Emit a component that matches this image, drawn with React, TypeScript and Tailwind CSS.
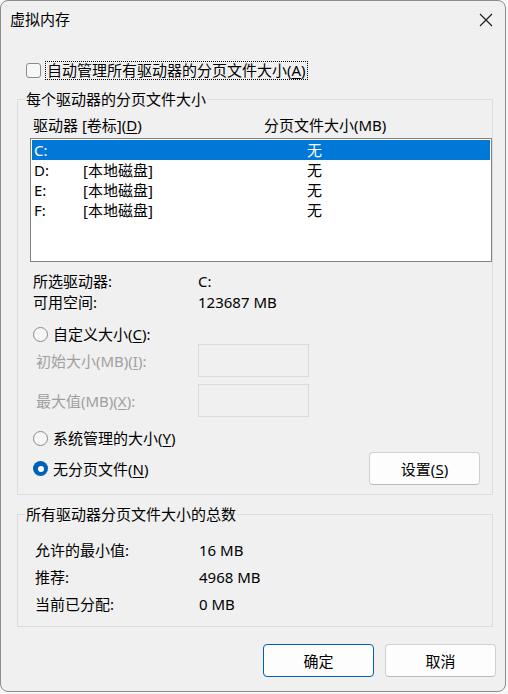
import React from "react";

const font = { fontFamily: '"Noto Sans", "Noto Sans CJK SC", sans-serif' };

function U({ children }: { children: React.ReactNode }) {
  return <span className="underline underline-offset-[2px] decoration-[1px]">{children}</span>;
}

function Radio({ checked }: { checked?: boolean }) {
  if (checked) {
    return (
      <span className="flex h-[15px] w-[15px] shrink-0 items-center justify-center rounded-full bg-[#005fb8]">
        <span className="h-[6px] w-[6px] rounded-full bg-white" />
      </span>
    );
  }
  return <span className="h-[15px] w-[15px] shrink-0 rounded-full border border-[#8a8a8a] bg-[#f6f6f6]" />;
}

export default function App() {
  const drives = [
    { d: "C:", v: "", s: "无", sel: true },
    { d: "D:", v: "[本地磁盘]", s: "无" },
    { d: "E:", v: "[本地磁盘]", s: "无" },
    { d: "F:", v: "[本地磁盘]", s: "无" },
  ];
  return (
    <div className="h-[694px] w-[508px] bg-[#f7f7f7]" style={font}>
      <div className="flex h-[692px] w-[506px] flex-col overflow-hidden rounded-[8px] border border-[#8c8c8c] bg-[#f0f0f0] text-[15px] leading-[20px] text-black">
        {/* title bar */}
        <div className="flex h-[35px] shrink-0 items-center justify-between pl-[9px] pr-[12px]">
          <span className="pt-[1px]">虚拟内存</span>
          <svg width="14" height="14" viewBox="0 0 14 14" className="mt-[2px]">
            <path d="M1 1 L13 13 M13 1 L1 13" stroke="#1a1a1a" strokeWidth="1.1" fill="none" />
          </svg>
        </div>

        {/* auto manage checkbox */}
        <div className="mt-[24px] flex h-[20px] items-center pl-[25px]">
          <span className="h-[15px] w-[15px] shrink-0 rounded-[3px] border border-[#8a8a8a] bg-[#f7f7f7]" />
          <span className="ml-[4px] border border-dotted border-black px-[1px] leading-[17px]">
            自动管理所有驱动器的分页文件大小(<U>A</U>)
          </span>
        </div>

        {/* group 1 */}
        <fieldset className="mt-[9px] ml-[16px] w-[476px] border border-[#dcdcdc] p-0 pb-[9px]">
          <legend className="ml-[7px] px-[1px] leading-[20px]">每个驱动器的分页文件大小</legend>
          <div className="mt-[6px] flex h-[20px] items-center pl-[15px]">
            <span className="w-[231px]">
              驱动器 [卷标](<U>D</U>)
            </span>
            <span>分页文件大小(MB)</span>
          </div>
          <div className="mt-[3px] ml-[12px] h-[124px] w-[462px] border border-[#828282] bg-white p-[1px]">
            {drives.map((r) => (
              <div
                key={r.d}
                className={
                  "flex h-[20px] items-center pl-[2px] " + (r.sel ? "bg-[#0078d7] text-white" : "")
                }
              >
                <span className="w-[49px]">{r.d}</span>
                <span className="w-[224px]">{r.v}</span>
                <span>{r.s}</span>
              </div>
            ))}
          </div>
          <div className="mt-[8px] flex h-[21px] items-center pl-[15px]">
            <span className="w-[165px]">所选驱动器:</span>
            <span>C:</span>
          </div>
          <div className="flex h-[21px] items-center pl-[15px]">
            <span className="w-[165px]">可用空间:</span>
            <span>123687 MB</span>
          </div>

          <div className="mt-[12px] flex h-[20px] items-center gap-[5px] pl-[15px]">
            <Radio />
            <span>
              自定义大小(<U>C</U>):
            </span>
          </div>
          <div className="flex h-[33px] items-center pl-[18px] text-[#a0a0a0]">
            <span className="w-[162px]">
              初始大小(MB)(<U>I</U>):
            </span>
            <span className="h-[33px] w-[111px] border border-[#dadada]" />
          </div>
          <div className="mt-[7px] flex h-[33px] items-center pl-[18px] text-[#a0a0a0]">
            <span className="w-[162px]">
              最大值(MB)(<U>X</U>):
            </span>
            <span className="h-[33px] w-[111px] border border-[#dadada]" />
          </div>
          <div className="mt-[11px] flex h-[20px] items-center gap-[5px] pl-[15px]">
            <Radio />
            <span>
              系统管理的大小(<U>Y</U>)
            </span>
          </div>
          <div className="mt-[4px] flex h-[33px] items-center justify-between pl-[15px] pr-[12px]">
            <div className="flex items-center gap-[5px]">
              <Radio checked />
              <span>
                无分页文件(<U>N</U>)
              </span>
            </div>
            <button className="h-[33px] w-[111px] rounded-[4px] border border-[#d0d0d0] border-b-[#bdbdbd] bg-[#fdfdfd]">
              设置(<U>S</U>)
            </button>
          </div>
        </fieldset>

        {/* group 2 */}
        <fieldset className="mt-[9px] ml-[16px] w-[476px] border border-[#dcdcdc] p-0 pt-[12px] pb-[9px]">
          <legend className="ml-[7px] px-[1px] leading-[20px]">所有驱动器分页文件大小的总数</legend>
          <div className="flex h-[27px] items-center pl-[17px]">
            <span className="w-[164px]">允许的最小值:</span>
            <span>16 MB</span>
          </div>
          <div className="flex h-[27px] items-center pl-[17px]">
            <span className="w-[164px]">推荐:</span>
            <span>4968 MB</span>
          </div>
          <div className="flex h-[27px] items-center pl-[17px]">
            <span className="w-[164px]">当前已分配:</span>
            <span>0 MB</span>
          </div>
        </fieldset>

        {/* buttons */}
        <div className="mt-[17px] flex justify-end gap-[11px] pr-[9px]">
          <button className="h-[33px] w-[111px] rounded-[4px] border border-[#005fb8] bg-[#fdfdfd]">
            确定
          </button>
          <button className="h-[33px] w-[111px] rounded-[4px] border border-[#d0d0d0] border-b-[#bdbdbd] bg-[#fdfdfd]">
            取消
          </button>
        </div>
      </div>
    </div>
  );
}
